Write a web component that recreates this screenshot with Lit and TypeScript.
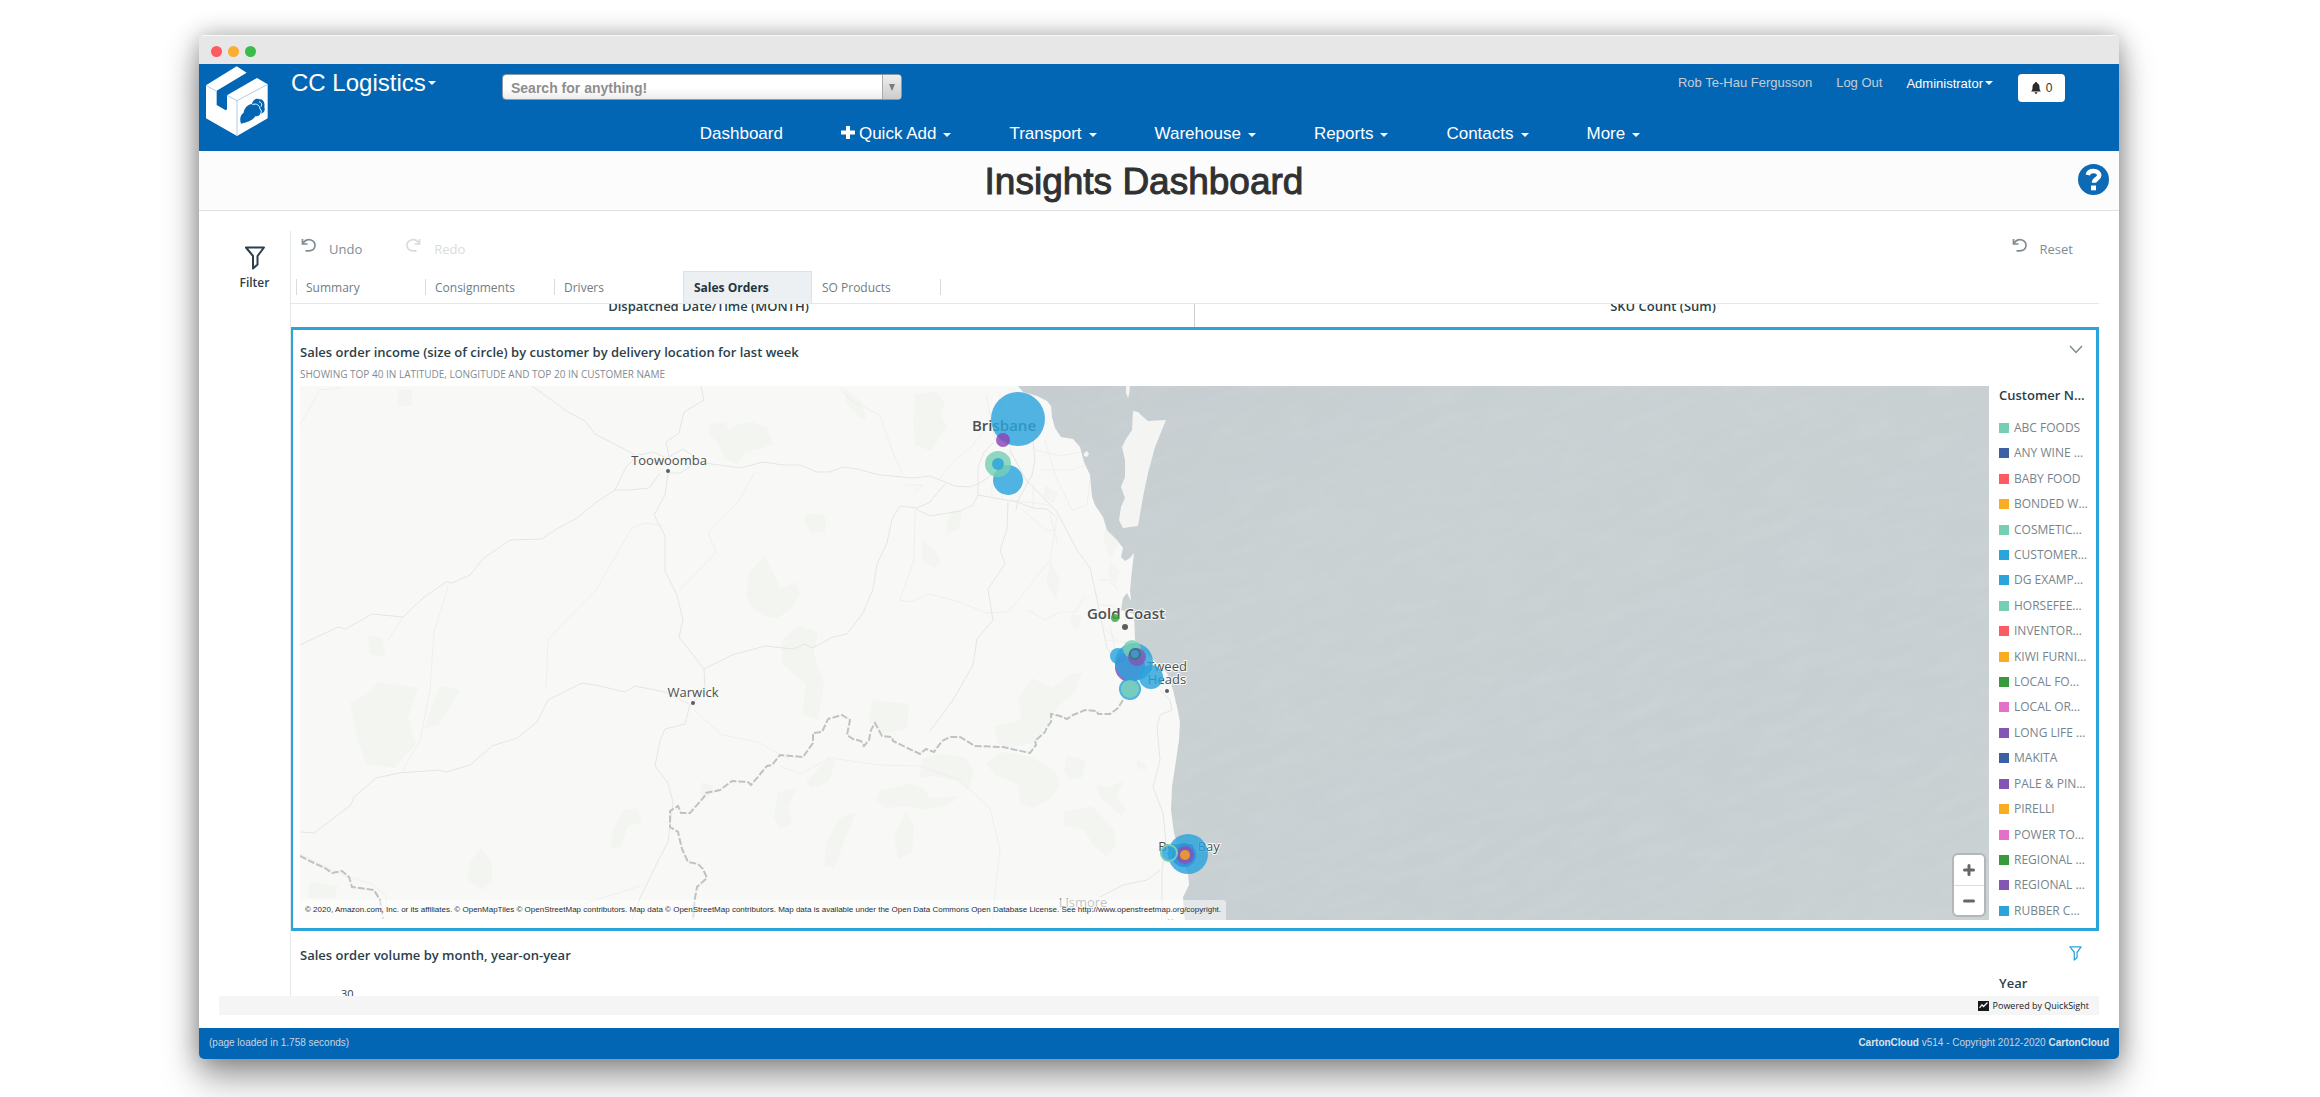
import { LitElement, html, css, svg } from "lit";
import { customElement, state } from "lit/decorators.js";
import { classMap } from "lit/directives/class-map.js";

const C = {
  green: "#77cfb3",
  navy: "#3c5fa5",
  red: "#fb5b63",
  orange: "#f9ab22",
  blue: "#2ba4dc",
  leaf: "#379a3f",
  pink: "#e172c8",
  purple: "#8456b4",
};

const CUSTOMERS: [string, string][] = [
  ["ABC FOODS", C.green],
  ["ANY WINE …", C.navy],
  ["BABY FOOD", C.red],
  ["BONDED W…", C.orange],
  ["COSMETIC…", C.green],
  ["CUSTOMER…", C.blue],
  ["DG EXAMP…", C.blue],
  ["HORSEFEE…", C.green],
  ["INVENTOR…", C.red],
  ["KIWI FURNI…", C.orange],
  ["LOCAL FO…", C.leaf],
  ["LOCAL OR…", C.pink],
  ["LONG LIFE …", C.purple],
  ["MAKITA", C.navy],
  ["PALE & PIN…", C.purple],
  ["PIRELLI", C.orange],
  ["POWER TO…", C.pink],
  ["REGIONAL …", C.leaf],
  ["REGIONAL …", C.purple],
  ["RUBBER C…", C.blue],
];

/* ---- map geometry ---- */

const SEA =
  "M1018 386L1023 392 1037 396 1047 401 1051 406 1052 417 1055 428 1061 437 1073 439 1080 447 1084 462 1090 475 1092 497 1095 505 1103 517 1107 530 1117 540 1123 548 1121 557 1125 561 1130 558 1134 553 1132 570 1130 590 1131 601 1127 593 1123 598 1121 610 1128 612 1134 614 1135 640 1140 647 1153 660 1167 673 1173 690 1177 707 1180 722 1179 740 1175 767 1172 787 1171 810 1174 833 1182 860 1188 873 1189 885 1183 897 1184 913 1185 920H1989V386Z";
const ISLAND =
  "M1133 411L1138 412 1142 416 1148 421 1166 420 1155 447 1148 473 1143 497 1138 526 1123 528 1119 520 1121 507 1125 498 1121 487 1125 477 1125 460 1122 447 1126 439 1132 430ZM1126 386H1130L1129 395 1128 398 1126 393ZM1084 453l3-2 2 3-2 3-3-1Z";
const BORDER =
  "M1123 700L1118 708 1110 714 1098 714 1097 711 1085 710 1073 715 1067 719 1060 716 1051 714 1051 722 1047 727 1045 732 1035 741 1036 745 1030 753 1003 747 975 746 960 737 950 737 942 741 934 752 926 749 920 754 893 741 892 737 882 736 875 723 871 730 869 740 864 746 861 741 853 739 847 735 850 720 842 715 828 719 822 732 813 733 813 743 803 757 780 755 772 765 767 766 751 785 748 782 732 781 720 790 706 793 704 797 690 813 681 813 678 806 670 811 670 827 678 832 682 849 688 862 698 864 703 869 707 878 697 887 695 898 693 920M300 856L314 863 325 868 332 873 342 871 349 877 352 887 374 890 380 900 383 919";
const ROADS =
  "M532 386L568 412 585 421 595 434 626 450 635 455M701 386L704 400 684 412 679 433 666 442 669 457" +
  "M640 455L653 452 667 458 683 449 705 463 740 468 763 462 783 465 800 465 817 472 830 472 843 467 857 469 880 475 913 478 930 476 955 486 970 487 978 484 993 474 1008 466" +
  "M668 472L665 495 654 515 665 536 665 571 677 595 683 620 679 637 693 655 704 669 705 689 693 703 690 705 685 724 665 729 660 741 655 766 668 783 673 802 668 842 657 863 640 898 632 920" +
  "M704 669L732 655 765 646 793 649 805 644 812 648 833 637 847 634 863 613 873 589 877 564 887 543 892 519 900 506 917 508 930 502 945 484" +
  "M916 509L930 516 960 511 973 505 978 495 978 467 984 452 993 443" +
  "M978 495L1017 502 1033 508 1047 509 1055 516M1010 450L1026 480 1057 512 1077 550 1090 568 1097 599 1107 648 1112 656" +
  "M1008 502L1007 529 1000 550 1005 564 988 589 993 620 977 639 973 665 953 700 930 731" +
  "M668 473L680 473 694 464M660 473L649 488 630 490 615 490 595 503 577 518 555 530 542 539 510 540 484 558 470 575 452 583 446 582 423 598 403 617 372 614 346 629 338 627 300 645" +
  "M640 453L626 467 615 490M689 704L665 692 635 686 625 692 600 686 582 683 548 700 537 722 517 738 492 746 470 765 446 772 440 770 399 773 376 778 354 797 351 805 314 833 300 832" +
  "M1160 690L1170 700 1172 710 1160 715 1157 727 1160 760 1153 787 1163 813 1166 843 1162 870 1162 920M1160 870L1147 880 1123 885 1100 897" +
  "M1033 440L1035 460 1032 475 1018 500 1016 510";
const MINOR =
  "M300 425L320 390 340 388M755 472L738 502 708 533 716 552 680 590M663 526L645 523 632 528 596 590 572 614 548 640 546 690M448 586L444 600 434 632 430 690 420 740 402 772M403 617L388 640M694 710L722 735 758 742 790 760 M780 766L800 774 830 758 880 765 920 766 960 780 990 808 1000 850 992 920" +
  "M840 388L850 400 880 415 892 450 902 474M915 510L914 560 900 600 910 602 930 594 960 602 986 613 1008 612 1030 585 1050 560 1057 516M905 485h18l-8 6M986 395L995 440M1000 390V440M1010 388V470M940 478L955 460 972 446 985 430M1035 450L1060 456 1080 452M1040 470H1072L1085 465M1045 440L1055 475 1072 510 1087 505 1090 480M1010 500L1050 505M992 484L992 500M1002 484V500M1033 484V508M1050 515L1058 545M1023 510L1045 530 1057 530M1028 610L1045 620 1060 612 1075 612 1085 595M1098 580L1110 580 1118 590M1100 605L1115 606M1103 628L1118 640M1106 640L1125 642M1110 625L1116 655" +
  "M300 854L325 866 345 876 372 884 386 896 386 912M640 886L612 895 580 905M1012 388L1026 400M1010 430L1000 400M1060 402L1048 398";
const PARKS =
  "M398 390h14v16h-14ZM711 424l14-2 4 8 10-6 14-2 14 6 6 16-10 4-18 4-8 12-12-6-8-16-8-8ZM806 514h16l4 5-1 13h-14l-6-8ZM764 556l8 14 8 18 16-6 4 12-8 14-14 10-14-2-12-8-6-14 4-22ZM915 395l20-4 10 12-4 12 6 12-16 24-16-6-2-22ZM952 510l10 2-3 18-12 4-1-8ZM922 540l14 12 6 10-8 6-12-8ZM368 636l14 2 4 20-16-4ZM350 702l14-6 14-14 40 6-10 30 8 26-22 24-28-4-8-24ZM440 686l20 4-22 36-14 2ZM782 640l16-14 20 6-4 22 10 30-6 36-16-6 4-30-24-20ZM624 810l14-2 4 14-14 4-8 22h-10l4-20ZM470 862l10-14 12 14v20l-10 8-14-10ZM310 882l28 4-4 12h-26ZM1018 700l14-22 20 10 20-14 10-2-6 20-18 14-12 20-22 4ZM1032 714l20 4-18 24-22 6-14-4-4-18 20-4ZM1000 752l30 4 26 16 4 14-12 14-14 8-14-4-2-20-22-8-10-12ZM922 758l20-4 24 4 8 14-6 18-12-10-22-4-14 2ZM1066 756l20 4-4 18-12 2-6-8ZM1137 760l8 4 2 6-10-2ZM880 790l30-6 14 4 6 10 30-2-10 8-24 6-20-4-20 2-10-8ZM906 812l8 14-2 26-14 8-4-24ZM1064 812l28-6 22 24 2 16-10 10-12-10-10-16-20-4ZM1096 784l12 4 16-8-8 18 10 10-4 8-22-18ZM840 818l16-6-12 30-10 26-10-2 2-22ZM778 792l18-4-8 18 4 18-12 4-6-10ZM828 758l8 4-8 20-16 6-6-6ZM873 700l36 4-2 24-22 6-16-12ZM1045 485l14 8-6 10-10-6ZM1050 560l10 20-4 20-10-16ZM1072 614l10 2-4 14-8-6ZM702 782l12 4-6 12-8-4ZM690 700l4 2-2 4ZM844 388l18 14 4 18-8-4-12-14ZM1106 520l14 22-10 18-6-20ZM1110 560l10 12-4 12-8-8Z";

interface Bubble {
  x: number;
  y: number;
  r: number;
  fill: string;
  ring?: string;
}

const BUBBLES: Bubble[] = [
  { x: 1018, y: 419, r: 27, fill: C.blue },
  { x: 1003, y: 440, r: 7, fill: "#8a46b4" },
  { x: 1008, y: 480, r: 15, fill: C.blue },
  { x: 998, y: 464, r: 13, fill: C.green },
  { x: 998, y: 464, r: 6, fill: C.blue },
  { x: 1115, y: 618, r: 4, fill: "#3aa63c" },
  { x: 1118, y: 656, r: 8, fill: C.blue },
  { x: 1130, y: 667, r: 15, fill: "#8a46b4" },
  { x: 1151, y: 677, r: 12, fill: C.blue },
  { x: 1134, y: 662, r: 19, fill: C.blue },
  { x: 1132, y: 667, r: 5, fill: "#3f97d6" },
  { x: 1132, y: 649, r: 9, fill: C.green },
  { x: 1137, y: 657, r: 9, fill: C.purple },
  { x: 1135, y: 654, r: 5, fill: "#3f97d6", ring: "#2f7d76" },
  { x: 1130, y: 689, r: 11, fill: C.blue },
  { x: 1130, y: 689, r: 9, fill: "#7fd3b4" },
  { x: 1188, y: 854, r: 20, fill: C.blue },
  { x: 1184, y: 855, r: 12, fill: "#2b90d8" },
  { x: 1185, y: 855, r: 9, fill: "#8a4fb4" },
  { x: 1185, y: 855, r: 5, fill: "#ffa31a" },
  { x: 1169, y: 853, r: 8, fill: C.blue, ring: C.green },
];

@customElement("income-map")
export class IncomeMap extends LitElement {
  static styles = css`
    :host {
      display: block;
      position: relative;
      height: 534px;
      overflow: hidden;
      font-family: "Open Sans", "Noto Sans", sans-serif;
    }
    .canvas {
      display: block;
      width: 100%;
      height: 100%;
    }
    .town {
      font-size: 13px;
      fill: #4c5052;
      stroke: #f8f9f7;
      stroke-width: 2px;
      paint-order: stroke;
    }
    .city {
      font-size: 15px;
      font-weight: 600;
    }
    .faint {
      fill: #85898b;
    }
    .credit {
      position: absolute;
      left: 0;
      bottom: 0;
      padding: 0 5px;
      border-radius: 0 3px 0 0;
      background: rgba(255, 255, 255, 0.5);
      font: 8px/20px "Liberation Sans", Arial, sans-serif;
      color: #1f2d36;
      white-space: nowrap;
    }
    .zoom {
      position: absolute;
      right: 5px;
      bottom: 5px;
      width: 30px;
      display: flex;
      flex-direction: column;
      border-radius: 4px;
      background: #fff;
      box-shadow: 0 0 0 2px rgba(0, 0, 0, 0.12);
    }
    .zoom button {
      height: 30px;
      padding: 0;
      border: 0;
      background: none;
      display: grid;
      place-items: center;
    }
    .zoom button + button {
      border-top: 1px solid #ddd;
    }
  `;

  render() {
    return html`
      <svg class="canvas" viewBox="300 386 1689 534" preserveAspectRatio="xMinYMid slice" role="img" aria-label="Income by delivery location">
        <defs>
          <linearGradient id="sea" x1="0" y1="0" x2="1" y2="1">
            <stop offset="0" stop-color="#c6cdd0" />
            <stop offset="0.3" stop-color="#cad1d3" />
            <stop offset="0.7" stop-color="#c8cfd2" />
            <stop offset="1" stop-color="#cad1d3" />
          </linearGradient>
          <filter id="swell" x="0" y="0" width="100%" height="100%">
            <feTurbulence type="fractalNoise" baseFrequency="0.02 0.08" numOctaves="3" seed="4" />
            <feColorMatrix values="0 0 0 0 1  0 0 0 0 1  0 0 0 0 1  0.9 0 0 0 -0.3" />
          </filter>
          <clipPath id="water"><path d=${SEA} /></clipPath>
        </defs>
        <rect x="300" y="386" width="1689" height="534" fill="#f8f9f7" />
        <path d=${PARKS} fill="#f3f5f1" />
        <path d=${MINOR} fill="none" stroke="#efefef" />
        <path d=${ROADS} fill="none" stroke="#e4e5e7" stroke-linejoin="round" />
        <path d=${SEA} fill="url(#sea)" />
        <g clip-path="url(#water)">
          <rect x="900" y="200" width="1300" height="1000" filter="url(#swell)" opacity="0.12" transform="rotate(-20 1500 650)" />
        </g>
        <path d=${ISLAND} fill="#f4f5f3" />
        <path d=${BORDER} fill="none" stroke="#c0c2c3" stroke-width="2" stroke-dasharray="7 2" />
        <circle cx="668" cy="471" r="2" fill="#5a5e60" />
        <circle cx="693" cy="703" r="2" fill="#5a5e60" />
        <circle cx="1125" cy="627" r="3" fill="#5a5e60" />
        <circle cx="1167" cy="691" r="2" fill="#5a5e60" />
        <g text-anchor="middle">
          <text class="town" x="669" y="465">Toowoomba</text>
          <text class="town" x="693" y="697">Warwick</text>
          <text class="town city" x="1004" y="431">Brisbane</text>
          <text class="town city" x="1126" y="619">Gold Coast</text>
          <text class="town" x="1167" y="671">Tweed</text>
          <text class="town" x="1167" y="684">Heads</text>
          <text class="town" x="1189" y="851">Byron Bay</text>
          <text class="town faint" x="1083" y="907">Lismore</text>
          <text class="town faint" x="1172" y="929">Ballina</text>
        </g>
        ${BUBBLES.map(
          (b) => svg`<circle cx=${b.x} cy=${b.y} r=${b.r} fill=${b.fill} fill-opacity="0.82"
            stroke=${b.ring ?? "none"} stroke-width="2" />`,
        )}
      </svg>
      <div class="credit">© 2020, Amazon.com, Inc. or its affiliates. © OpenMapTiles © OpenStreetMap contributors. Map data © OpenStreetMap contributors. Map data is available under the Open Data Commons Open Database License. See http://www.openstreetmap.org/copyright.</div>
      <div class="zoom">
        <button aria-label="Zoom in">
          <svg width="12" height="12" viewBox="0 0 12 12"><path d="M6 1.500V10.500M1.500 6H10.500" stroke="#666" stroke-width="3" stroke-linecap="round" /></svg>
        </button>
        <button aria-label="Zoom out">
          <svg width="12" height="12" viewBox="0 0 12 12"><path d="M1.500 6H10.500" stroke="#666" stroke-width="3" stroke-linecap="round" /></svg>
        </button>
      </div>
    `;
  }
}

const funnel = (w: number, h: number, weight: number) => svg`
  <svg width=${w} height=${h} viewBox="0 0 20 24" fill="none" stroke="currentColor" stroke-width=${weight} stroke-linejoin="round">
    <path d="M1 1.500H19L12.500 10V18.500L8 22.500V10Z" />
  </svg>`;

const turn = svg`
  <svg width="15" height="15" viewBox="0 0 15 15" fill="none" stroke="currentColor" stroke-width="1.700">
    <path d="M1.500 1V6H6.500M1.800 5.600C3.800 2.400 7.200 1.200 10 2C12.600 2.800 14 4.900 14 7.300C14 10.500 11.500 12.800 8 12.800H4.500" />
  </svg>`;

@customElement("app-root")
export class AppRoot extends LitElement {
  @state() private tab = "Sales Orders";

  private tabs = ["Summary", "Consignments", "Drivers", "Sales Orders", "SO Products"];
  private menus = ["Transport", "Warehouse", "Reports", "Contacts", "More"];

  static styles = css`
    :host {
      display: block;
      box-sizing: border-box;
      padding: 35px 201px 38px 199px;
      overflow: hidden;
      background: #fff;
      font-family: "Liberation Sans", Arial, sans-serif;
      color: #2b3a44;
    }
    *,
    *::before {
      box-sizing: border-box;
    }
    a {
      color: inherit;
      text-decoration: none;
    }
    button {
      font: inherit;
      color: inherit;
      background: none;
      border: 0;
      padding: 0;
      text-align: left;
    }
    h1,
    h2,
    h3,
    p,
    ul {
      margin: 0;
      padding: 0;
      list-style: none;
    }
    .window {
      border-radius: 5px;
      background: #fff;
      overflow: hidden;
      box-shadow: 0 20px 36px rgba(0, 0, 0, 0.36), 0 0 24px rgba(0, 0, 0, 0.3);
    }
    .chrome {
      height: 29px;
      padding: 2px 0 0 12px;
      display: flex;
      align-items: center;
      gap: 6px;
      background: #e7e7e7;
      border-top: 1px solid #f8f8f8;
    }
    .light {
      width: 11px;
      height: 11px;
      border-radius: 50%;
      background: #fb5b63;
    }
    .light.amber {
      background: #f9ae30;
    }
    .light.go {
      background: #3cbb4d;
    }
    .caret::after {
      content: "";
      display: inline-block;
      margin-left: 7px;
      vertical-align: 2px;
      border: 4px solid transparent;
      border-top-color: currentColor;
      border-bottom: 0;
    }
    .caret.tight::after {
      margin-left: 2px;
      vertical-align: 3px;
    }
    .brand.caret::after {
      vertical-align: 6px;
    }
    .header {
      height: 87px;
      display: flex;
      background: #0366b5;
      color: #fff;
    }
    .logo {
      padding: 1px 0 0 6px;
      width: 92px;
    }
    .bars {
      flex: 1;
      min-width: 0;
    }
    .top {
      display: flex;
      height: 59px;
      align-items: flex-start;
    }
    .brand {
      width: 211px;
      padding-top: 4px;
      font-size: 24px;
      line-height: 30px;
    }
    .search {
      width: 400px;
      height: 26px;
      margin-top: 10px;
      display: flex;
      border: 1px solid #8a9aa8;
      border-radius: 4px;
      background: linear-gradient(#fff 55%, #ececec);
    }
    .search input {
      flex: 1;
      min-width: 0;
      padding: 1px 8px 0;
      border: 0;
      background: none;
      font: bold 14px "Liberation Sans", Arial, sans-serif;
      color: #444;
      outline: 0;
    }
    .search input::placeholder {
      color: #8e8e8e;
      opacity: 1;
    }
    .search button {
      width: 19px;
      border-left: 1px solid #aaa;
      border-radius: 0 3px 3px 0;
      background: linear-gradient(#eee, #ccc);
      display: grid;
      place-items: center;
    }
    .search button::after {
      content: "";
      border: 3px solid transparent;
      border-top: 7px solid #7c7c7c;
      border-bottom: 0;
    }
    .user {
      margin-left: auto;
      padding-right: 54px;
      display: flex;
      font-size: 13px;
      line-height: 18px;
    }
    .user a {
      margin: 10px 24px 0 0;
      color: #c3ced6;
    }
    .user .role {
      margin: 11px 25px 0 0;
      height: 18px;
    }
    .alerts {
      width: 47px;
      height: 28px;
      margin-top: 10px;
      border-radius: 4px;
      background: #fff;
      color: #333;
      font-size: 12px;
      display: flex;
      align-items: center;
      justify-content: center;
      gap: 5px;
    }
    .nav {
      display: flex;
      justify-content: center;
      gap: 58px;
      padding-right: 70px;
      font-size: 17px;
      line-height: 22px;
    }
    .nav svg {
      margin-right: 4px;
    }
    .title {
      display: flex;
      align-items: center;
      height: 60px;
      padding: 0 10px 0 11px;
      background: #fcfcfc;
      border-bottom: 1px solid #e0e2e2;
    }
    .title h1 {
      flex: 1;
      padding-top: 3px;
      text-align: center;
      font-size: 37px;
      line-height: 40px;
      font-weight: 400;
      color: #2f3133;
      -webkit-text-stroke: 1px #2f3133;
    }
    .help {
      width: 31px;
      height: 34px;
    }
    .insights {
      margin: 20px 20px 0;
      display: flex;
      font-family: "Open Sans", "Noto Sans", sans-serif;
      color: #2b3f4a;
    }
    .rail {
      width: 71px;
      padding-top: 15px;
      text-align: center;
      font-size: 12px;
      line-height: 16px;
    }
    .rail button {
      display: inline-grid;
      justify-items: center;
      gap: 5px;
      font-weight: 600;
    }
    .sheet {
      flex: 1;
      min-width: 0;
      border-left: 1px solid #e5e8e8;
    }
    .tools {
      display: flex;
      gap: 44px;
      height: 40px;
      padding: 6px 26px 0 10px;
      font-size: 13px;
      line-height: 24px;
      font-weight: 500;
      color: #7f8c94;
    }
    .tools button {
      display: flex;
      gap: 13px;
      height: 24px;
    }
    .tools svg {
      margin-top: 1px;
    }
    .tools button[disabled] {
      color: #d8dcdd;
    }
    .tools .reset {
      margin-left: auto;
    }
    .tabs {
      display: flex;
      padding-left: 5px;
      border-bottom: 1px solid #e5e8e8;
    }
    .tab {
      position: relative;
      width: 129px;
      height: 32px;
      padding: 0 10px;
      font-size: 12px;
      font-weight: 500;
      color: #6e7d86;
    }
    .tab::before,
    .tab:last-child::after {
      content: "";
      position: absolute;
      top: 8px;
      left: 0;
      height: 16px;
      border-left: 1px solid #d8dcdd;
    }
    .tab:last-child::after {
      left: auto;
      right: 0;
    }
    .tab.active {
      background: #ecf0f3;
      border: 1px solid #dde2e5;
      border-bottom: 0;
      color: #22343f;
      font-weight: 700;
    }
    .tab.active::before,
    .tab.active + .tab::before {
      display: none;
    }
    .scroll {
      height: 692px;
      overflow: hidden;
    }
    .axes {
      display: grid;
      grid-template-columns: 1fr 1fr;
      height: 23px;
      overflow: hidden;
      text-align: center;
      font-size: 13px;
      font-weight: 600;
      line-height: 20px;
    }
    .axes span {
      margin-top: -8px;
      height: 31px;
    }
    .axes span:first-child {
      padding-right: 68px;
      border-right: 1px solid #c9cfd3;
    }
    .axes span:last-child {
      padding-left: 32px;
    }
    .card {
      margin-left: -1px;
      padding: 9px 7px 7px;
      border: 3px solid #2ba4dc;
    }
    .head {
      display: flex;
      justify-content: space-between;
      align-items: flex-start;
      padding-right: 6px;
    }
    .head h2 {
      font-size: 13px;
      line-height: 26px;
      font-weight: 600;
    }
    .note {
      padding: 1px 0 4px;
      font-size: 10px;
      line-height: 16px;
      color: #7f8c94;
      font-weight: 500;
    }
    .plot {
      display: flex;
    }
    .plot income-map {
      flex: 1;
      min-width: 0;
    }
    .legend {
      width: 100px;
      padding-left: 10px;
      white-space: nowrap;
      font-size: 12px;
      color: #76848c;
    }
    .legend h3 {
      font-size: 13px;
      line-height: 18px;
      font-weight: 600;
      color: #2b3f4a;
    }
    .legend ul {
      height: 503px;
      margin-top: 14px;
      display: flex;
      flex-direction: column;
      justify-content: space-between;
    }
    .legend li {
      display: flex;
      align-items: center;
      gap: 5px;
      line-height: 20px;
      overflow: hidden;
    }
    .swatch {
      flex: none;
      width: 10px;
      height: 10px;
    }
    .head svg {
      display: block;
      margin-top: 6px;
    }
    .card.next {
      border: 0;
      padding: 11px 10px 0;
    }
    .next .head {
      padding-right: 7px;
      color: #2ba4dc;
    }
    .next .head h2 {
      color: #2b3f4a;
    }
    .next .head svg {
      margin-top: 4px;
    }
    .scale {
      display: flex;
      justify-content: space-between;
      padding-left: 41px;
      font-size: 11px;
      line-height: 20px;
    }
    .scale span {
      padding-top: 16px;
    }
    .scale h3 {
      width: 90px;
      padding-top: 5px;
      font-size: 13px;
      font-weight: 600;
    }
    .powered {
      margin: 0 20px 13px;
      height: 19px;
      padding-right: 10px;
      display: flex;
      align-items: center;
      justify-content: flex-end;
      gap: 4px;
      background: #f5f5f5;
      color: #16191c;
      font: 500 9px "Open Sans", "Noto Sans", sans-serif;
    }
    .footer {
      height: 31px;
      padding: 0 10px 3px;
      display: flex;
      align-items: center;
      justify-content: space-between;
      background: #0366b5;
      color: #c9d4dc;
      font-size: 10px;
    }
    .footer a {
      font-weight: 700;
      color: #dbe3e9;
    }
  `;

  render() {
    return html`
      <div class="window">
        <div class="chrome"><i class="light"></i><i class="light amber"></i><i class="light go"></i></div>

        <header class="header">
          <a class="logo" href="#" aria-label="CartonCloud">
            <svg width="64" height="72" viewBox="30 105 192 216">
              <path fill="#fff" d="M33 166L125 109 155 128 65 182 65 225 92 241 96 238 96 196 186 144 218 163V265L126 318 33 265Z" />
              <path fill="none" stroke="#a9cdea" stroke-width="3" d="M33 166L65 184M96 196L126 212 218 163M126 212V318" />
              <path fill="#0366b5" d="M138 281C133 268 136 254 146 248C148 233 160 222 171 222C172 211 184 203 192 208C203 205 211 217 208 231C212 242 206 250 196 251C194 257 188 259 181 259C173 272 153 279 138 281Z" />
              <path fill="none" stroke="#fff" stroke-width="3" d="M172 224C184 219 194 225 195 237C200 240 200 247 196 251M192 216C200 216 202 224 198 230" />
            </svg>
          </a>
          <div class="bars">
            <div class="top">
              <button class="brand caret tight">CC Logistics</button>
              <form class="search">
                <input type="text" placeholder="Search for anything!" aria-label="Search for anything!" />
                <button type="button" aria-label="Open search list"></button>
              </form>
              <div class="user">
                <a href="#">Rob Te-Hau Fergusson</a>
                <a href="#">Log Out</a>
                <button class="role caret tight">Administrator</button>
                <button class="alerts">
                  <svg width="10" height="12" viewBox="0 0 10 12"><path fill="#2c2c2c" d="M5 0C5.600 0 6 .4 6 1C8 1.600 8.500 3.500 8.500 5.500C8.500 7.500 9 8.500 10 9.500H0C1 8.500 1.500 7.500 1.500 5.500C1.500 3.500 2 1.600 4 1C4 .4 4.400 0 5 0ZM3.500 10.300H6.500C6.500 11.200 5.800 11.800 5 11.800S3.500 11.200 3.500 10.300Z" /></svg>
                  0
                </button>
              </div>
            </div>
            <nav class="nav">
              <a href="#">Dashboard</a>
              <a href="#" class="caret"><svg width="14" height="13" viewBox="0 0 14 13"><path d="M7 0V13M0 6.500H14" stroke="#fff" stroke-width="4" /></svg>Quick Add</a>
              ${this.menus.map((m) => html`<a href="#" class="caret">${m}</a>`)}
            </nav>
          </div>
        </header>

        <div class="title">
          <h1>Insights Dashboard</h1>
          <button class="help" aria-label="Help">
            <svg width="31" height="31" viewBox="0 0 31 31">
              <circle cx="15.500" cy="15.500" r="15.500" fill="#0f6ab5" />
              <path fill="none" stroke="#fff" stroke-width="4.500" d="M9.800 11C10.400 7.800 13 7 15.500 7C18.800 7 21.200 9 21.200 11.500C21.200 14.800 16 15 16 18.800" />
              <rect x="13" y="21.500" width="5" height="4.800" fill="#fff" />
            </svg>
          </button>
        </div>

        <main class="insights">
          <div class="rail"><button>${funnel(20, 24, 2)}Filter</button></div>
          <div class="sheet">
            <div class="tools">
              <button>${turn}Undo</button>
              <button disabled>
                <svg width="15" height="15" viewBox="0 0 15 15" fill="none" stroke="currentColor" stroke-width="1.700">
                  <path d="M13.500 1V6H8.500M13.200 5.600C11.200 2.400 7.800 1.200 5 2C2.400 2.800 1 4.900 1 7.300C1 10.500 3.500 12.800 7 12.800H10.500" />
                </svg>Redo
              </button>
              <button class="reset">${turn}Reset</button>
            </div>
            <div class="tabs" role="tablist">
              ${this.tabs.map(
                (t) => html`<button
                  role="tab"
                  aria-selected=${t === this.tab}
                  class=${classMap({ tab: true, active: t === this.tab })}
                  @click=${() => (this.tab = t)}
                >${t}</button>`,
              )}
            </div>
            <div class="scroll">
              <div class="axes"><span>Dispatched Date/Time (MONTH)</span><span>SKU Count (Sum)</span></div>
              <section class="card">
                <div class="head">
                  <h2>Sales order income (size of circle) by customer by delivery location for last week</h2>
                  <button aria-label="Visual menu">
                    <svg width="14" height="9" viewBox="0 0 14 9" fill="none" stroke="#7f8c94" stroke-width="1.500"><path d="M1 1L7 7.500L13 1" /></svg>
                  </button>
                </div>
                <p class="note">SHOWING TOP 40 IN LATITUDE, LONGITUDE AND TOP 20 IN CUSTOMER NAME</p>
                <div class="plot">
                  <income-map></income-map>
                  <div class="legend">
                    <h3>Customer N…</h3>
                    <ul>
                      ${CUSTOMERS.map(([name, color]) => html`<li><i class="swatch" style="background:${color}"></i>${name}</li>`)}
                    </ul>
                  </div>
                </div>
              </section>
              <section class="card next">
                <div class="head">
                  <h2>Sales order volume by month, year-on-year</h2>
                  <button aria-label="Filters">${funnel(13, 15, 2)}</button>
                </div>
                <div class="scale"><span>30</span><h3>Year</h3></div>
              </section>
            </div>
          </div>
        </main>
        <div class="powered">
          <svg width="11" height="10" viewBox="0 0 11 10"><rect width="11" height="10" fill="#16191c" /><path d="M1.500 7L4 3.800L5.500 5.500L9.500 1.500" fill="none" stroke="#fff" stroke-width="1.200" /></svg>
          Powered by QuickSight
        </div>

        <footer class="footer">
          <span>(page loaded in 1.758 seconds)</span>
          <span><a href="#">CartonCloud</a> v514 - Copyright 2012-2020 <a href="#">CartonCloud</a></span>
        </footer>
      </div>
    `;
  }
}
